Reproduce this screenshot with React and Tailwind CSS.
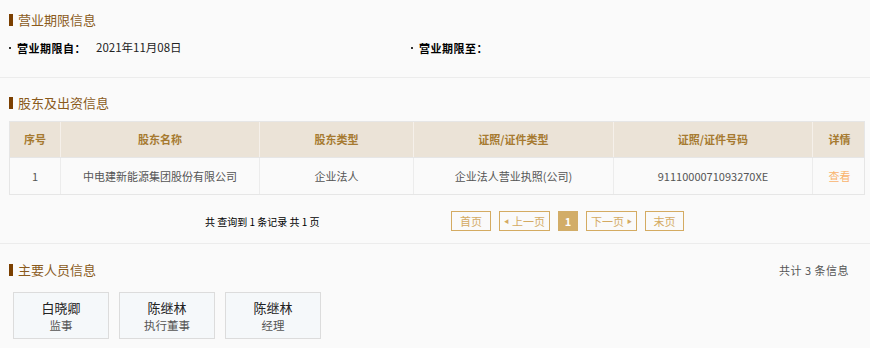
import React from "react";

const shareholders = [
  {
    no: 1,
    name: "中电建新能源集团股份有限公司",
    type: "企业法人",
    certType: "企业法人营业执照(公司)",
    certNo: "9111000071093270XE",
  },
];

const people = [
  { name: "白晓卿", role: "监事" },
  { name: "陈继林", role: "执行董事" },
  { name: "陈继林", role: "经理" },
];

const Title = ({ children }) => (
  <div className="flex items-center h-[20px] pl-[9px]">
    <span className="w-[4px] h-[12px] bg-[#7b3f00] mr-[5px]" />
    <span className="text-[13px] text-[#8a5a1c]">{children}</span>
  </div>
);

const PageBtn = ({ children, w }) => (
  <div
    className={`${w} h-[20px] border border-[#d4ab62] text-[#d4aa62] text-[11px] flex items-center justify-center`}
  >
    {children}
  </div>
);

const App = () => {
  return (
    <div
      className="w-[870px] h-[348px] overflow-hidden bg-[#fafafa] text-[#333]"
      style={{ fontFamily: '"Noto Sans CJK SC", "Noto Sans", sans-serif' }}
    >
      {/* 营业期限信息 */}
      <section className="pt-[10px] pb-[19px] border-b border-[#ececec]">
        <Title>营业期限信息</Title>
        <div className="flex h-[20px] mt-[8px] items-center text-[11px]">
          <div className="flex items-center w-[411px] pl-[9px]">
            <span className="w-[2px] h-[2px] bg-[#333] mr-[6px]" />
            <span className="font-bold text-black w-[79px] tracking-[0.5px]">营业期限自：</span>
            <span className="text-[11.5px] text-[#222]">2021年11月08日</span>
          </div>
          <div className="flex items-center">
            <span className="w-[2px] h-[2px] bg-[#333] mr-[6px]" />
            <span className="font-bold text-black tracking-[0.5px]">营业期限至：</span>
          </div>
        </div>
      </section>

      {/* 股东及出资信息 */}
      <section className="pt-[15px] border-b border-[#ececec] h-[166px]">
        <Title>股东及出资信息</Title>
        <div className="ml-[9px] mt-[8px] w-[856px]">
          <div className="grid grid-cols-[51px_199px_154px_200px_199px_53px] h-[37px] bg-[#ebe3d7] border border-[#e6e6e6] text-[11px] font-bold text-[#a67a30]">
            {["序号", "股东名称", "股东类型", "证照/证件类型", "证照/证件号码", "详情"].map(
              (h, i) => (
                <div
                  key={h}
                  className={`flex items-center justify-center ${i < 5 ? "border-r border-[#f5f0ea]" : ""}`}
                >
                  {h}
                </div>
              )
            )}
          </div>
          {shareholders.map((s) => (
            <div
              key={s.no}
              className="grid grid-cols-[51px_199px_154px_200px_199px_53px] h-[37px] border border-t-0 border-[#e6e6e6] text-[11px] text-[#555]"
            >
              <div className="flex items-center justify-center border-r border-[#ececec]">{s.no}</div>
              <div className="flex items-center justify-center border-r border-[#ececec]">{s.name}</div>
              <div className="flex items-center justify-center border-r border-[#ececec]">{s.type}</div>
              <div className="flex items-center justify-center border-r border-[#ececec]">{s.certType}</div>
              <div className="flex items-center justify-center border-r border-[#ececec]">{s.certNo}</div>
              <div className="flex items-center justify-center text-[#f9b46d]">查看</div>
            </div>
          ))}
        </div>
        <div className="flex items-center h-[20px] mt-[16px]">
          <div className="w-[451px] pl-[205px] text-[10px] text-black">共 查询到 1 条记录 共 1 页</div>
          <div className="flex gap-[8px]">
            <PageBtn w="w-[40px]">首页</PageBtn>
            <PageBtn w="w-[51px]">
              <span className="text-[5px] mr-[3px]">◀</span>上一页
            </PageBtn>
            <div className="w-[20px] h-[20px] bg-[#d2ad68] text-white text-[11px] font-bold flex items-center justify-center">
              1
            </div>
            <PageBtn w="w-[51px]">
              下一页<span className="text-[5px] ml-[3px]">▶</span>
            </PageBtn>
            <PageBtn w="w-[39px]">末页</PageBtn>
          </div>
        </div>
      </section>

      {/* 主要人员信息 */}
      <section className="pt-[16px]">
        <div className="flex items-center justify-between pr-[21px]">
          <Title>主要人员信息</Title>
          <span className="text-[11px] text-[#555] tracking-[0.5px]">共计 3 条信息</span>
        </div>
        <div className="flex gap-[10px] pl-[13px] mt-[12px]">
          {people.map((p, i) => (
            <div
              key={i}
              className="w-[96px] h-[47px] bg-[#f5f8fa] border border-[#dcdcdc] flex flex-col items-center justify-center"
            >
              <div className="text-[13px] leading-[18px] text-[#222]">{p.name}</div>
              <div className="text-[11.5px] leading-[16px] text-[#555]">{p.role}</div>
            </div>
          ))}
        </div>
      </section>
    </div>
  );
};

export default App;
